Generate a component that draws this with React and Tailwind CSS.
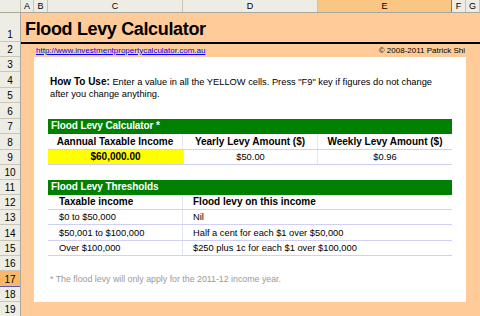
import React from 'react';

const font = { fontFamily: '"Liberation Sans", Arial, sans-serif' };

const columns = [
    { label: 'A', w: 'w-[13px]' },
    { label: 'B', w: 'w-[14px]' },
    { label: 'C', w: 'w-[135px]' },
    { label: 'D', w: 'w-[135px]' },
    { label: 'E', w: 'w-[134px]', active: true },
    { label: 'F', w: 'w-[14px]' },
    { label: 'G', w: 'w-[14px]' },
];

const rows = [
    'h-[29px]', 'h-[15px]', 'h-[15px]', 'h-[16px]', 'h-[15px]', 'h-[16px]', 'h-[15px]',
    'h-[16px]', 'h-[15px]', 'h-[15px]', 'h-[15px]', 'h-[15px]', 'h-[15px]', 'h-[16px]',
    'h-[15px]', 'h-[15px]', 'h-[16px]', 'h-[15px]', 'h-[15px]',
];

const thresholds = [
    { income: '$0 to $50,000', levy: 'Nil', h: 'h-[15px]' },
    { income: '$50,001 to $100,000', levy: 'Half a cent for each $1 over $50,000', h: 'h-[16px]' },
    { income: 'Over $100,000', levy: '$250 plus 1c for each $1 over $100,000', h: 'h-[15px]' },
];

const GreenBar = ({ title }) => (
    <div className="h-[15px] bg-[#008000] flex items-end pb-[2px] pl-[3px]">
        <span className="text-[10px] leading-[12px] font-bold text-white tracking-[-0.1px]">{title}</span>
    </div>
);

const App = () => {
    return (
        <div className="w-[480px] h-[316px] overflow-hidden bg-[#ffcc99] text-black" style={font}>
            {/* Column headers */}
            <div className="flex h-[13px] bg-[#eeede5] border-b border-[#aca899]">
                <div className="w-[21px] border-r border-[#c8c4b4]" />
                {columns.map((col) => (
                    <div
                        key={col.label}
                        className={`${col.w} flex items-center justify-center text-[9px] leading-none border-r ${
                            col.active ? 'bg-[#f9c683] border-[#7a77b8]' : 'border-[#c8c4b4]'
                        }`}
                    >
                        {col.label}
                    </div>
                ))}
            </div>

            <div className="flex">
                {/* Row headers */}
                <div className="w-[21px] flex flex-col bg-[#eeede5] border-r border-[#aca899]">
                    {rows.map((h, i) => (
                        <div
                            key={i}
                            className={`${h} flex items-end justify-center pb-[1px] text-[10px] leading-[11px] border-b ${
                                i === 16 ? 'bg-[#f9b868] border-[#5a58b0]' : 'border-[#cbc7b8]'
                            }`}
                        >
                            {i + 1}
                        </div>
                    ))}
                </div>

                {/* Sheet */}
                <div className="flex-1 flex flex-col">
                    <div className="h-[29px] flex items-end pl-[4px] pb-[3px]">
                        <h1 className="text-[18px] leading-[20px] font-bold tracking-[-0.35px]">Flood Levy Calculator</h1>
                    </div>
                    <div className="h-[15px] border-t-2 border-black flex justify-between pl-[15px] pr-[15px] pt-[2px]">
                        <a className="text-[8px] leading-[10px] text-[#0000ff] underline">
                            http://www.investmentpropertycalculator.com.au
                        </a>
                        <span className="text-[8px] leading-[10px]">© 2008-2011 Patrick Shi</span>
                    </div>

                    {/* White panel, columns B to F */}
                    <div className="ml-[13px] mr-[14px] bg-white px-[14px]">
                        <div className="h-[15px]" />
                        <div className="h-[31px] pl-[2px] pt-[4px] text-[9.3px] leading-[12px]">
                            <p>
                                <b className="text-[10px]">How To Use:</b> Enter a value in all the YELLOW cells. Press "F9" key if figures do not change
                            </p>
                            <p>after you change anything.</p>
                        </div>
                        <div className="h-[16px]" />

                        <GreenBar title="Flood Levy Calculator *" />
                        <div className="grid grid-cols-[135px_135px_134px] h-[16px] border-b border-[#d0d0f6] text-[10px] leading-[12px] font-bold">
                            <div className="flex items-end justify-center pb-[1px] border-r border-[#e4e4f8]">Aannual Taxable Income</div>
                            <div className="flex items-end justify-center pb-[1px] border-r border-[#e4e4f8]">Yearly Levy Amount ($)</div>
                            <div className="flex items-end justify-center pb-[1px]">Weekly Levy Amount ($)</div>
                        </div>
                        <div className="grid grid-cols-[135px_135px_134px] h-[15px] border-b border-[#d0d0f6] leading-[12px]">
                            <div className="flex items-end justify-center pb-[1px] bg-[#ffff00] text-[10px] font-bold">$60,000.00</div>
                            <div className="flex items-end justify-center pb-[1px] text-[9.3px] border-x border-[#e4e4f8]">$50.00</div>
                            <div className="flex items-end justify-center pb-[1px] text-[9.3px]">$0.96</div>
                        </div>
                        <div className="h-[15px]" />

                        <GreenBar title="Flood Levy Thresholds" />
                        <div className="grid grid-cols-[135px_269px] h-[15px] border-b border-[#d0d0f6] text-[10px] leading-[12px] font-bold">
                            <div className="flex items-end pl-[11px] pb-[1px] border-r border-[#e4e4f8]">Taxable income</div>
                            <div className="flex items-end pl-[10px] pb-[1px]">Flood levy on this income</div>
                        </div>
                        {thresholds.map((row) => (
                            <div
                                key={row.income}
                                className={`grid grid-cols-[135px_269px] ${row.h} border-b border-[#d0d0f6] text-[9.3px] leading-[12px]`}
                            >
                                <div className="flex items-end pl-[11px] pb-[1px] border-r border-[#e4e4f8]">{row.income}</div>
                                <div className="flex items-end pl-[10px] pb-[1px]">{row.levy}</div>
                            </div>
                        ))}
                        <div className="h-[15px]" />
                        <div className="h-[16px] flex items-end pl-[2px] pb-[2px] text-[8.8px] leading-[12px] text-[#9a9a9a]">
                            * The flood levy will only apply for the 2011-12 income year.
                        </div>
                        <div className="h-[15px]" />
                    </div>
                    <div className="h-[15px]" />
                </div>
            </div>
        </div>
    );
};

export default App;
